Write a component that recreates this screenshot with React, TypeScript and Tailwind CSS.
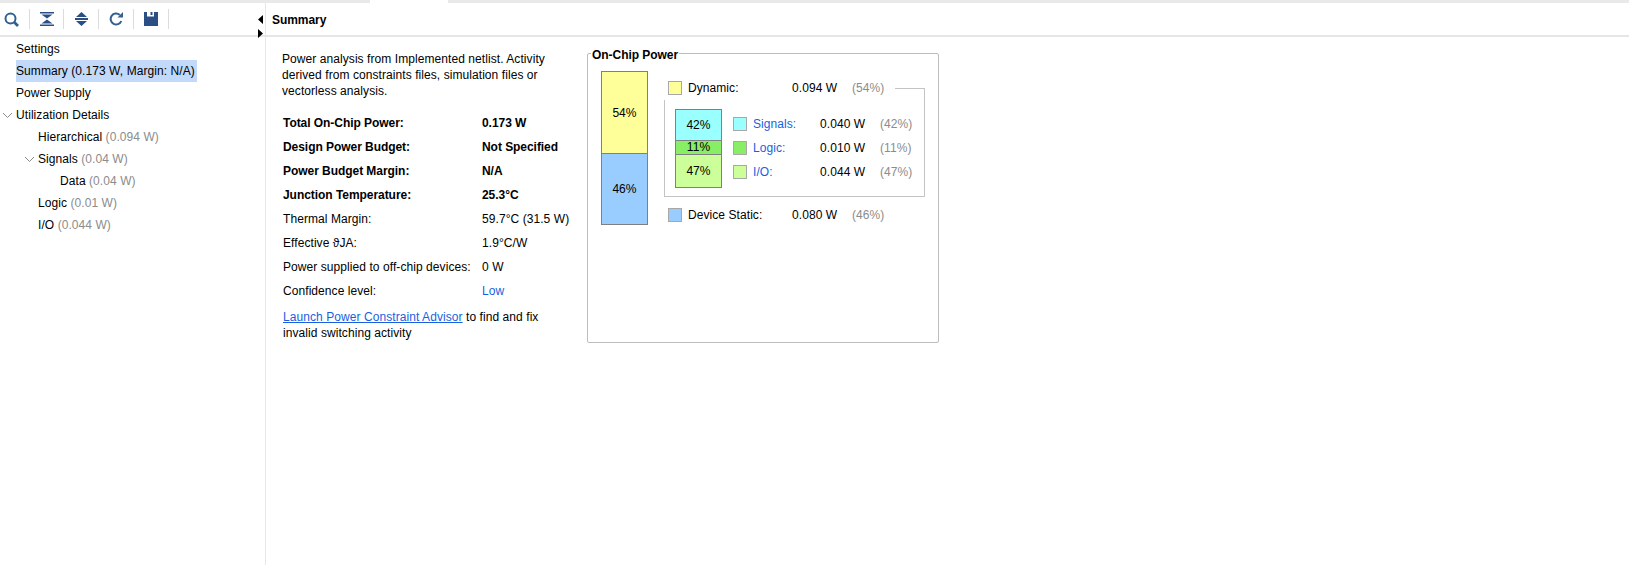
import React from "react";

const S = ({ c }: { c: string }) => <span className={`w-[14px] h-[14px] border border-[#a8a8a8] shrink-0 ${c}`} />;

const Row = ({ a, b, bold, blue }: { a: string; b: string; bold?: boolean; blue?: boolean }) => (
  <div className={`h-6 flex items-center pl-px ${bold ? "font-bold tracking-[-0.05px]" : ""}`}>
    <span className="w-[199px]">{a}</span>
    <span className={blue ? "text-[#1a5fe0]" : ""}>{b}</span>
  </div>
);

const Tree = ({ pad, label, val, sel, arrow }: { pad: string; label: string; val?: string; sel?: boolean; arrow?: boolean }) => (
  <div className={`h-[22px] flex items-center relative ${pad}`}>
    {arrow && (
      <svg className="absolute -ml-[14px]" width="11" height="7" viewBox="0 0 11 7" fill="none" stroke="#8a8a8a" strokeWidth="1">
        <path d="M1 1l4.500 4.500L10 1" />
      </svg>
    )}
    <span className={`h-[22px] flex items-center whitespace-pre ${sel ? "bg-[#c3d9f9] pr-[2px]" : ""}`}>
      {label}
      {val && <span className="text-[#8c8c8c]"> {val}</span>}
    </span>
  </div>
);

export default function App() {
  return (
    <div className="w-[1629px] h-[565px] overflow-hidden bg-white text-black text-[12px] tracking-[0.07px] flex flex-col font-['Liberation_Sans',Arial,sans-serif]">
      <div className="h-[3px] flex shrink-0">
        <div className="w-[370px] bg-[#e9e9e9]" />
        <div className="w-[78px]" />
        <div className="flex-1 bg-[#e9e9e9]" />
      </div>
      <div className="flex flex-1 min-h-0">
        <aside className="w-[266px] border-r border-[#e8e8e8] shrink-0 relative">
          <div className="h-[34px] border-b-2 border-[#e6e6e6] flex items-center pl-1">
            <svg width="15" height="15" viewBox="0 0 15 15" fill="none" stroke="#33608f" strokeWidth="2">
              <circle cx="6.500" cy="6.500" r="5" />
              <path d="M10.300 10.300L14 14" strokeWidth="2.800" />
            </svg>
            <div className="w-px h-[20px] bg-[#dcdcdc] ml-[10px] mr-[10px]" />
            <svg width="14" height="14" viewBox="0 0 14 14" fill="#2a4f85">
              <path d="M0 0h14v1.600H0zM0 12.400h14V14H0zM1.500 2.600h11L7 6.400zM7 7.600L12.500 11.400h-11z" />
            </svg>
            <div className="w-px h-[20px] bg-[#dcdcdc] ml-[9px] mr-[11px]" />
            <svg width="13" height="14" viewBox="0 0 13 14" fill="#2a4f85">
              <path d="M6.500 0L12 5H1zM6.500 14L1 9h11zM0 6h13v2H0z" />
            </svg>
            <div className="w-px h-[20px] bg-[#dcdcdc] ml-[10px] mr-[10px]" />
            <svg width="14" height="14" viewBox="0 0 14 14" fill="none" stroke="#33608f" strokeWidth="2">
              <path d="M12.300 9A5.500 5.500 0 1 1 10.800 2.900" />
              <path d="M14 0v5.500H8.500z" fill="#33608f" stroke="none" />
            </svg>
            <div className="w-px h-[20px] bg-[#dcdcdc] ml-[10px] mr-[10px]" />
            <svg width="14" height="14" viewBox="0 0 14 14" fill="#2a4f85">
              <path d="M0 0h3v4.500h7V0h4v14H0z" />
              <path d="M6.500 0h2v3h-2z" />
            </svg>
            <div className="w-px h-[20px] bg-[#dcdcdc] ml-[10px]" />
          </div>
          <div className="pt-[1px]">
            <Tree pad="pl-4" label="Settings" />
            <Tree pad="pl-4" label="Summary (0.173 W, Margin: N/A)" sel />
            <Tree pad="pl-4" label="Power Supply" />
            <Tree pad="pl-4" label="Utilization Details" arrow />
            <Tree pad="pl-[38px]" label="Hierarchical" val="(0.094 W)" />
            <Tree pad="pl-[38px]" label="Signals" val="(0.04 W)" arrow />
            <Tree pad="pl-[60px]" label="Data" val="(0.04 W)" />
            <Tree pad="pl-[38px]" label="Logic" val="(0.01 W)" />
            <Tree pad="pl-[38px]" label="I/O" val="(0.044 W)" />
          </div>
          <svg className="absolute left-[258px] top-[12px]" width="6" height="26" viewBox="0 0 6 26" fill="#000">
            <path d="M5 0v9L0 4.500zM0 14v9l5-4.500z" />
          </svg>
        </aside>
        <main className="flex-1 min-w-0 flex flex-col">
          <div className="h-[34px] border-b-2 border-[#e6e6e6] flex items-center pl-[6px] pt-[2px] font-bold tracking-[-0.05px]">Summary</div>
          <div className="flex items-start pt-[14px]">
            <div className="w-[321px] pl-4 shrink-0">
              <p className="w-[270px] leading-4">Power analysis from Implemented netlist. Activity derived from constraints files, simulation files or vectorless analysis.</p>
              <div className="mt-[12px]">
                <Row a="Total On-Chip Power:" b="0.173 W" bold />
                <Row a="Design Power Budget:" b="Not Specified" bold />
                <Row a="Power Budget Margin:" b="N/A" bold />
                <Row a="Junction Temperature:" b="25.3°C" bold />
                <Row a="Thermal Margin:" b="59.7°C (31.5 W)" />
                <Row a="Effective ϑJA:" b="1.9°C/W" />
                <Row a="Power supplied to off-chip devices:" b="0 W" />
                <Row a="Confidence level:" b="Low" blue />
              </div>
              <p className="w-[270px] leading-4 mt-[6px] pl-px">
                <span className="text-[#1a5fe0] underline">Launch Power Constraint Advisor</span> to find and fix invalid switching activity
              </p>
            </div>
            <section className="relative w-[352px] h-[290px] mt-[2px] border border-[#bdbdbd] rounded-[2px] pt-[17px] pl-[13px] flex">
              <span className="absolute left-[3px] -top-[8px] bg-white px-px font-bold tracking-[-0.05px]">On-Chip Power</span>
              <div className="w-[47px] h-[154px] border border-[#808080] flex flex-col text-center shrink-0">
                <div className="h-[81px] bg-[#ffff99] flex items-center justify-center">54%</div>
                <div className="flex-1 bg-[#99ccff] border-t border-[#808080] flex items-center justify-center">46%</div>
              </div>
              <div className="ml-[16px] w-[261px]">
                <div className="flex items-center h-[16px] mt-[9px] pl-[4px]">
                  <S c="bg-[#ffff99]" />
                  <span className="w-[104px] ml-[6px]">Dynamic:</span>
                  <span className="w-[60px]">0.094 W</span>
                  <span className="text-[#8c8c8c]">(54%)</span>
                </div>
                <div className="relative h-[109px] -mt-[8px] border-b border-r border-[#c4c4c4] rounded-br-[1px] flex pl-[11px] pt-[21px]">
                  <div className="absolute right-0 top-0 w-[29px] border-t border-[#c4c4c4]" />
                  <div className="absolute left-0 top-[12px] bottom-0 w-px bg-[#c4c4c4]" />
                  <div className="w-[47px] h-[79px] border border-[#808080] flex flex-col text-center shrink-0">
                    <div className="h-[30px] pb-px bg-[#99ffff] flex items-center justify-center">42%</div>
                    <div className="h-[14px] pb-px bg-[#88ee66] border-t border-[#808080] flex items-center justify-center">11%</div>
                    <div className="flex-1 bg-[#ccff99] border-t border-[#808080] flex items-center justify-center">47%</div>
                  </div>
                  <div className="ml-[11px] pt-[3px] flex flex-col">
                    {[
                      ["Signals:", "0.040 W", "(42%)", "bg-[#99ffff]"],
                      ["Logic:", "0.010 W", "(11%)", "bg-[#88ee66]"],
                      ["I/O:", "0.044 W", "(47%)", "bg-[#ccff99]"],
                    ].map(([n, v, p, c]) => (
                      <div key={n} className="h-6 flex items-center">
                        <S c={c} />
                        <span className="w-[67px] ml-[6px] text-[#1a5fe0]">{n}</span>
                        <span className="w-[60px]">{v}</span>
                        <span className="text-[#8c8c8c]">{p}</span>
                      </div>
                    ))}
                  </div>
                </div>
                <div className="flex items-center h-[16px] mt-[10px] pl-[4px]">
                  <S c="bg-[#99ccff]" />
                  <span className="w-[104px] ml-[6px]">Device Static:</span>
                  <span className="w-[60px]">0.080 W</span>
                  <span className="text-[#8c8c8c]">(46%)</span>
                </div>
              </div>
            </section>
          </div>
        </main>
      </div>
    </div>
  );
}
